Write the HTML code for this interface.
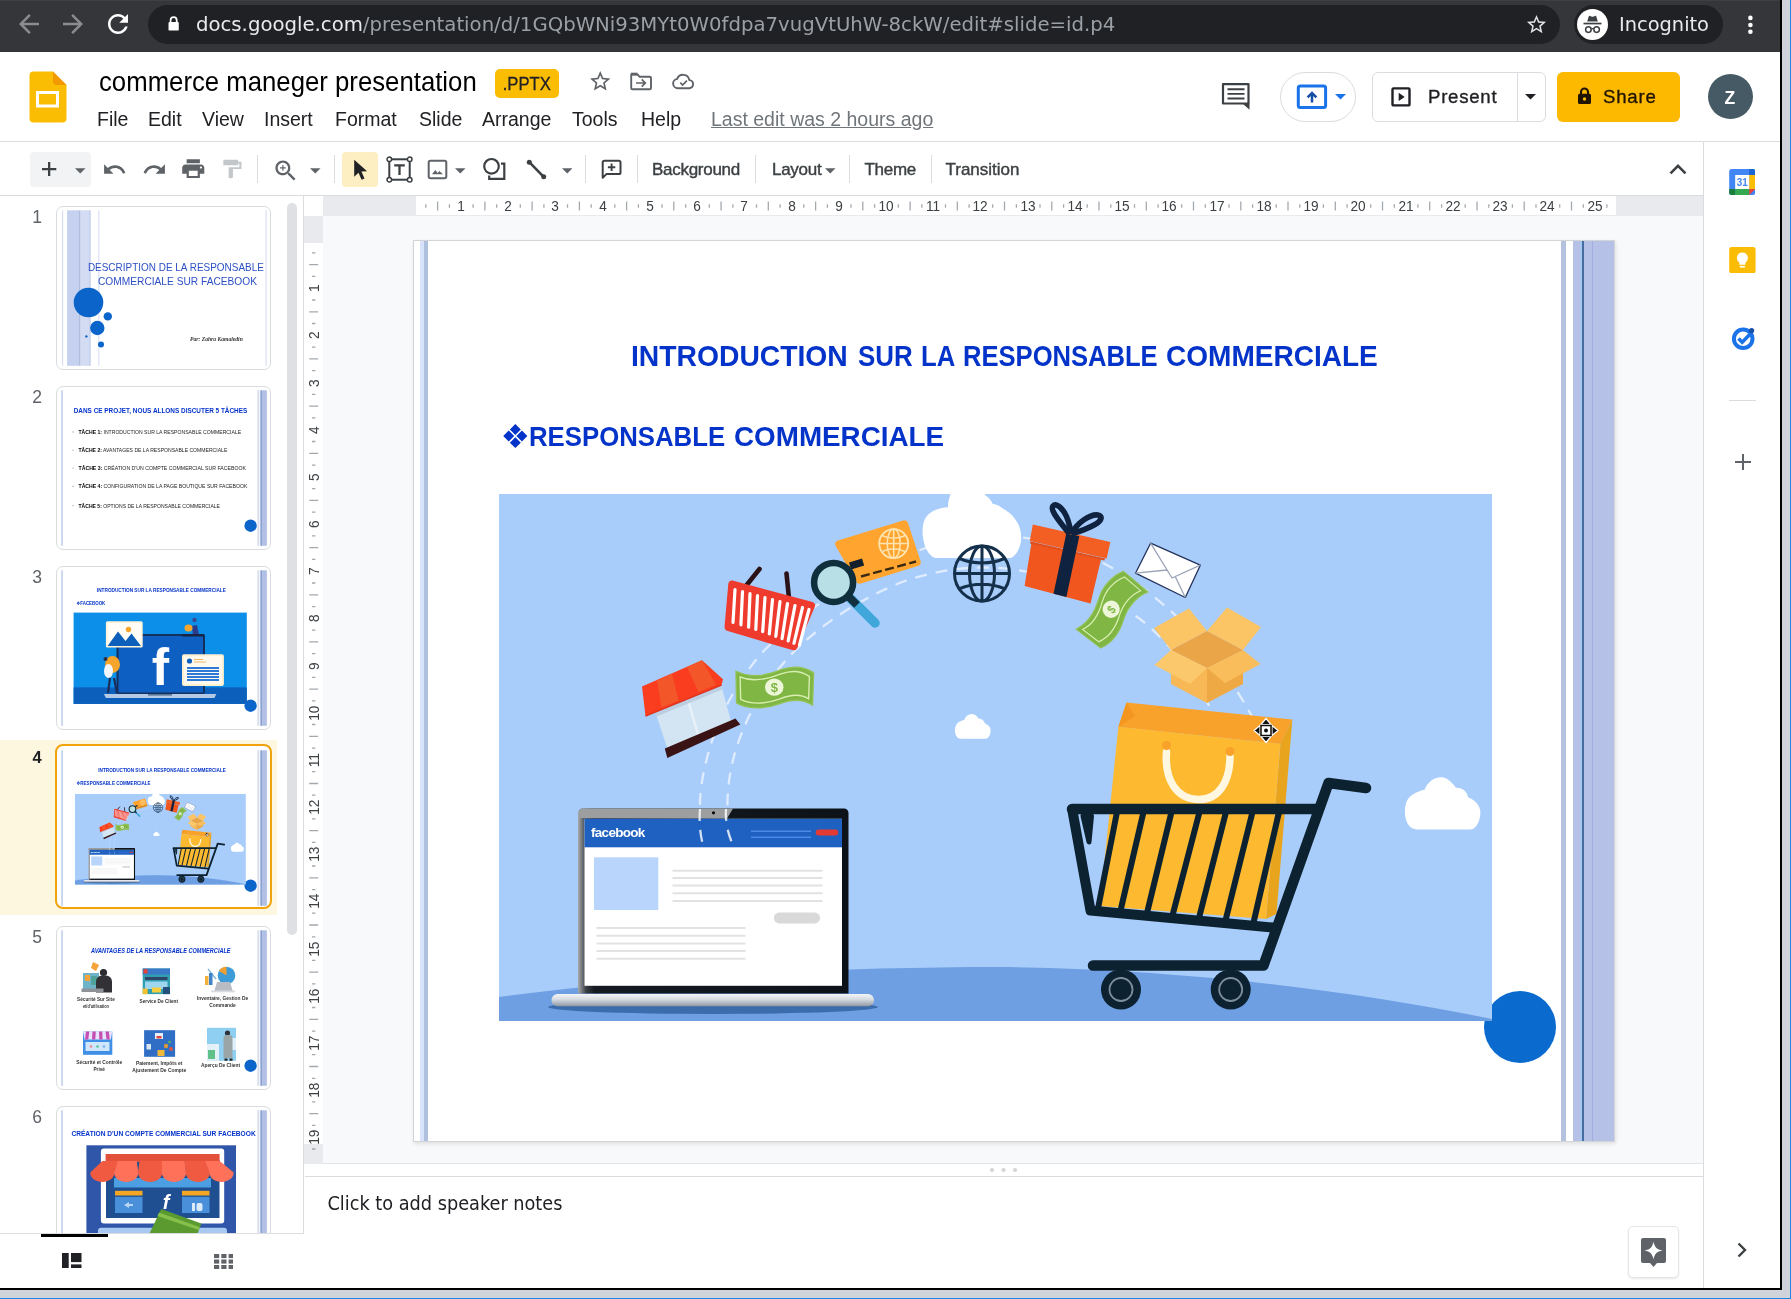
<!DOCTYPE html>
<html lang="en">
<head>
<meta charset="utf-8">
<title>commerce maneger presentation - Google Slides</title>
<style>
*{box-sizing:border-box;margin:0;padding:0}
html,body{width:1791px;height:1299px;overflow:hidden;background:#d0d3d9}
body{font-family:"Liberation Sans",sans-serif;color:#202124;position:relative}
.abs{position:absolute}
.t{position:absolute;white-space:nowrap;line-height:1}
#frame{position:absolute;left:0;top:0;width:1791px;height:1299px;background:#d0d3d9;border-right:1px solid #1e88e5;border-bottom:1px solid #1e88e5}
#win{position:absolute;left:0;top:0;width:1782px;height:1290px;background:#000}
#page{will-change:transform;position:absolute;left:0;top:0;width:1780px;height:1288px;background:#fff;overflow:hidden}
/* chrome */
#chrome{left:0;top:0;width:1780px;height:52px;background:#35363a;border-top:1px solid #3e3f42}
#omni{left:148px;top:5px;width:1412px;height:39px;border-radius:19.5px;background:#202124}
#incog{left:1574px;top:5px;width:149px;height:39px;border-radius:19.5px;background:#202124}
.dv{font-family:"DejaVu Sans",sans-serif}
.dvc{font-family:"DejaVu Sans Condensed","DejaVu Sans",sans-serif;font-stretch:condensed}
/* docs header */
#hdr{left:0;top:52px;width:1780px;height:90px;background:#fff;border-bottom:1px solid #dadce0}
.menu{font-size:19.5px;color:#202124;top:110px}
/* toolbar */
#tb{left:0;top:142px;width:1703px;height:54px;background:#fff;border-bottom:1px solid #dadce0}
.tbt{font-size:17px;color:#3c4043;top:160.600px;letter-spacing:-.28px;-webkit-text-stroke:.4px #3c4043}
.sep{position:absolute;top:155px;width:1px;height:28px;background:#dadce0}
/* panels */
#film{left:0;top:196px;width:304px;height:1092px;background:#fff;border-right:1px solid #dadce0}
#side{left:1703px;top:142px;width:77px;height:1146px;background:#fff;border-left:1px solid #dadce0}
#canvas{left:305px;top:196px;width:1398px;height:968px;background:#f8f9fa}
#notes{left:305px;top:1176px;width:1398px;height:112px;background:#fff;border-top:1px solid #dadce0}
.rn{width:30px;text-align:center;font-size:14.800px;color:#3c4043;transform:scaleX(.92)}
.rv{width:30px;height:14.600px;text-align:center;font-size:14.800px;color:#3c4043;transform:rotate(-90deg) scaleX(.92)}
.num{font-size:17.500px;color:#5f6368}
.thumb{position:absolute;left:56px;width:215px;height:163px;border:2px solid #dadce0;border-radius:6px;background:#fff;overflow:hidden}
</style>
</head>
<body>
<div id="frame"></div>
<div id="win"></div>
<div id="page">

<!-- ============ BROWSER CHROME ============ -->
<div id="chrome" class="abs"></div>
<div id="omni" class="abs"></div>
<div id="incog" class="abs"></div>

<svg class="abs" style="left:13.5px;top:9px" width="30" height="30" viewBox="0 0 24 24" fill="#8b8c8f"><path d="M20 11H7.83l5.59-5.59L12 4l-8 8 8 8 1.41-1.41L7.83 13H20v-2z"/></svg>
<svg class="abs" style="left:58.3px;top:9px" width="30" height="30" viewBox="0 0 24 24" fill="#8b8c8f"><path d="M12 4l-1.41 1.41L16.17 11H4v2h12.17l-5.58 5.59L12 20l8-8z"/></svg>
<svg class="abs" style="left:102.8px;top:9px" width="30" height="30" viewBox="0 0 24 24" fill="#fff"><path d="M17.65 6.35C16.2 4.9 14.21 4 12 4c-4.42 0-7.99 3.58-7.99 8s3.57 8 7.99 8c3.73 0 6.84-2.55 7.73-6h-2.08c-.82 2.33-3.04 4-5.65 4-3.31 0-6-2.69-6-6s2.69-6 6-6c1.66 0 3.14.69 4.22 1.78L13 11h7V4l-2.35 2.35z"/></svg>
<svg class="abs" style="left:167.5px;top:16px" width="11.3" height="15.3" viewBox="0 0 12 17"><path d="M2.6 7V4.6a3.4 3.4 0 0 1 6.8 0V7" fill="none" stroke="#fff" stroke-width="1.9"/><rect x="0.3" y="6.6" width="11.4" height="9.6" rx="1.3" fill="#fff"/></svg>
<svg class="abs" style="left:1525px;top:13px" width="23" height="23" viewBox="0 0 24 24" fill="#dfe1e5"><path d="M22 9.24l-7.19-.62L12 2 9.19 8.63 2 9.24l5.46 4.73L5.82 21 12 17.27 18.18 21l-1.63-7.03L22 9.24zM12 15.4l-3.76 2.27 1-4.28-3.32-2.88 4.38-.38L12 6.1l1.71 4.04 4.38.38-3.32 2.88 1 4.28L12 15.4z"/></svg>
<svg class="abs" style="left:1576.5px;top:9px" width="31" height="31" viewBox="0 0 31 31"><circle cx="15.5" cy="15.5" r="15.5" fill="#fff"/><path d="M10.2 12.6l1.5-5c.2-.6.8-.9 1.400-.7l1.300.5c.7.300 1.500.300 2.200 0l1.300-.5c.6-.2 1.200.1 1.400.7l1.500 5z" fill="#3c4043"/><rect x="6.500" y="13.700" width="18" height="1.700" fill="#3c4043"/><circle cx="11.400" cy="20.600" r="2.800" fill="none" stroke="#3c4043" stroke-width="1.500"/><circle cx="19.600" cy="20.600" r="2.800" fill="none" stroke="#3c4043" stroke-width="1.500"/><path d="M14.100 20.100c.9-.6 1.900-.6 2.800 0" fill="none" stroke="#3c4043" stroke-width="1.300"/></svg>
<svg class="abs" style="left:1746px;top:13px" width="9" height="23" viewBox="0 0 9 23" fill="#fff"><circle cx="4.400" cy="4.900" r="2.300"/><circle cx="4.400" cy="12" r="2.300"/><circle cx="4.400" cy="18.800" r="2.300"/></svg>

<span id="url" class="t dv" style="left:196px;top:15.200px;font-size:19.700px;color:#9aa0a6"><span style="color:#e8eaed">docs.google.com</span>/presentation/d/1GQbWNi93MYt0W0fdpa7vugVtUhW-8ckW/edit#slide=id.p4</span>
<span id="inc" class="t dv" style="left:1619px;top:14.5px;font-size:19.4px;color:#e8eaed">Incognito</span>

<!-- ============ DOCS HEADER ============ -->
<div id="hdr" class="abs"></div>

<svg class="abs" style="left:28px;top:70px" width="40" height="54" viewBox="0 0 40 54"><path d="M5.500 1.500h19.500l13.500 13.500v33.500a4 4 0 0 1-4 4h-29a4 4 0 0 1-4-4v-43a4 4 0 0 1 4-4z" fill="#fbbc04"/><path d="M25 1.500l13.500 13.500h-9.500a4 4 0 0 1-4-4z" fill="#f29900"/><rect x="9.500" y="22.500" width="20" height="13.500" fill="none" stroke="#fff" stroke-width="3"/></svg>
<svg class="abs" style="left:587.5px;top:69px" width="24.500" height="24.500" viewBox="0 0 24 24" fill="#5f6368"><path d="M22 9.240l-7.190-.620L12 2 9.190 8.630 2 9.240l5.460 4.730L5.820 21 12 17.270 18.180 21l-1.630-7.030L22 9.240zM12 15.400l-3.760 2.270 1-4.280-3.320-2.880 4.380-.380L12 6.100l1.710 4.040 4.380.380-3.320 2.880 1 4.280L12 15.400z"/></svg>
<svg class="abs" style="left:628px;top:69px" width="26" height="24" viewBox="0 0 26 24" fill="none" stroke="#5f6368" stroke-width="1.900"><path d="M3.200 5.500h6.300l2.200 2.300h10a1.300 1.300 0 0 1 1.300 1.300v9.800a1.300 1.300 0 0 1-1.300 1.300h-17.200a1.300 1.300 0 0 1-1.300-1.300z" stroke-linejoin="round"/><path d="M3 5h6.500" stroke-width="2.600"/><path d="M8 14h9M13.700 10.400l3.600 3.600-3.600 3.600" stroke-width="1.700"/></svg>
<svg class="abs" style="left:671px;top:70px" width="25" height="22" viewBox="0 0 25 22" fill="none" stroke="#5f6368" stroke-width="1.900"><path d="M6.800 18.200a4.700 4.700 0 0 1-.600-9.360a6.300 6.300 0 0 1 12.100 1.300a4.050 4.050 0 0 1 .2 8.060z" stroke-linejoin="round"/><path d="M9.300 12.700l2.300 2.300 4.300-4.300" stroke-width="1.700"/></svg>
<svg class="abs" style="left:1220px;top:81px" width="32" height="30" viewBox="0 0 32 30"><path d="M3 3.200h25.500v19.300h-22.500h-3z" fill="none" stroke="#3c4043" stroke-width="2.200" stroke-linejoin="round"/><path d="M22.500 22.500h7v6.300z" fill="#3c4043"/><path d="M7.500 8.300h17M7.500 12.900h17M7.500 17.500h17" stroke="#3c4043" stroke-width="1.900"/></svg>
<div class="abs" style="left:1280px;top:72px;width:75.500px;height:49.500px;border:1px solid #dadce0;border-radius:25px"></div>
<svg class="abs" style="left:1295px;top:83px" width="34" height="28" viewBox="0 0 34 28"><rect x="3.300" y="3.100" width="27.300" height="21.500" rx="2" fill="none" stroke="#1a73e8" stroke-width="3"/><path d="M17 19.500v-9M12.600 14.400l4.400-4.400 4.400 4.400" fill="none" stroke="#174ea6" stroke-width="2.500"/></svg>
<svg class="abs" style="left:1334.500px;top:94px" width="11" height="6" viewBox="0 0 11 6"><path d="M0 0h11l-5.500 5.500z" fill="#1a73e8"/></svg>
<div class="abs" style="left:1372px;top:72px;width:174px;height:49.500px;border:1px solid #dadce0;border-radius:6px"></div>
<div class="abs" style="left:1517px;top:72px;width:1px;height:49.500px;background:#dadce0"></div>
<svg class="abs" style="left:1390px;top:86px" width="22" height="22" viewBox="0 0 22 22"><rect x="2.500" y="2.400" width="17" height="17" rx="1" fill="none" stroke="#202124" stroke-width="2.400"/><path d="M8.700 6.800l6 4.100-6 4.100z" fill="#202124"/></svg>
<span id="present" class="t" style="left:1428px;top:87.500px;font-size:18.600px;color:#202124;letter-spacing:.75px;-webkit-text-stroke:.35px #202124">Present</span>
<svg class="abs" style="left:1525px;top:94px" width="11" height="6" viewBox="0 0 11 6"><path d="M0 0h11l-5.500 5.500z" fill="#202124"/></svg>
<div class="abs" style="left:1557px;top:71.500px;width:123px;height:50.500px;background:#fdb900;border-radius:6px"></div>
<svg class="abs" style="left:1577px;top:87px" width="15" height="18" viewBox="0 0 15 18"><path d="M4 7.500V5a3.500 3.500 0 0 1 7 0v2.500" fill="none" stroke="#201400" stroke-width="2.100"/><rect x="1" y="6.800" width="13" height="10.300" rx="1.500" fill="#201400"/><circle cx="7.500" cy="12" r="1.700" fill="#fbbc04"/></svg>
<span id="share" class="t" style="left:1603px;top:87.500px;font-size:18.600px;color:#201400;letter-spacing:.8px;-webkit-text-stroke:.35px #201400">Share</span>
<div class="abs" style="left:1707.500px;top:74px;width:45px;height:45px;border-radius:50%;background:#455a64"></div>
<span id="av" class="t" style="left:1724px;top:87.5px;font-size:19px;color:#fff;font-weight:bold;transform:scaleX(.92)">Z</span>

<span id="title" class="t" style="left:98.500px;top:67.800px;font-size:27.500px;color:#000;transform-origin:0 0;transform:scaleX(.936)">commerce maneger presentation</span>
<span id="pptx" class="t" style="left:495px;top:69px;width:64px;height:29px;background:#fbbc04;border-radius:5px;font-size:18.5px;line-height:30px;text-align:center;color:#202124;-webkit-text-stroke:.3px #202124"><span style="display:inline-block;transform:scaleX(.9)">.PPTX</span></span>
<span id="m1" class="t menu" style="left:97px">File</span>
<span id="m2" class="t menu" style="left:148px">Edit</span>
<span id="m3" class="t menu" style="left:202px">View</span>
<span id="m4" class="t menu" style="left:264px">Insert</span>
<span id="m5" class="t menu" style="left:335px">Format</span>
<span id="m6" class="t menu" style="left:419px">Slide</span>
<span id="m7" class="t menu" style="left:482px">Arrange</span>
<span id="m8" class="t menu" style="left:572px">Tools</span>
<span id="m9" class="t menu" style="left:641px">Help</span>
<span id="m10" class="t menu" style="left:711px;color:#70757a;text-decoration:underline">Last edit was 2 hours ago</span>

<!-- ============ TOOLBAR ============ -->
<div id="tb" class="abs"></div>

<div class="abs" style="left:30px;top:152px;width:61px;height:35px;border-radius:4px;background:#f1f3f4"></div>
<svg class="abs" style="left:42.300px;top:162px" width="14.300" height="14.300" viewBox="0 0 15 15"><path d="M7.500 0v15M0 7.500h15" stroke="#3c4043" stroke-width="2.400"/></svg>
<svg class="abs" style="left:75px;top:168px" width="10.500" height="5.500" viewBox="0 0 10 5"><path d="M0 0h10l-5 5z" fill="#5f6368"/></svg>
<svg class="abs" style="left:101.500px;top:156.800px" width="25" height="25" viewBox="0 0 24 24" fill="#5f6368"><path d="M12.500 8c-2.650 0-5.050.990-6.900 2.600L2 7v9h9l-3.620-3.620c1.390-1.160 3.160-1.880 5.120-1.880 3.540 0 6.550 2.310 7.600 5.500l2.370-.780C21.080 11.030 17.150 8 12.500 8z"/></svg>
<svg class="abs" style="left:141.900px;top:156.800px" width="25" height="25" viewBox="0 0 24 24" fill="#5f6368"><path d="M18.400 10.600C16.550 8.990 14.150 8 11.500 8c-4.650 0-8.580 3.030-9.960 7.220L3.900 16c1.050-3.190 4.050-5.500 7.600-5.500 1.950 0 3.730.720 5.120 1.880L13 16h9V7l-3.600 3.600z"/></svg>
<svg class="abs" style="left:179.500px;top:156.200px" width="26.500" height="25.200" preserveAspectRatio="none" viewBox="0 0 24 24" fill="#5f6368"><path d="M19 8H5c-1.660 0-3 1.340-3 3v6h4v4h12v-4h4v-6c0-1.660-1.340-3-3-3zm-3 11H8v-5h8v5zm3-7c-.550 0-1-.450-1-1s.450-1 1-1 1 .450 1 1-.450 1-1 1zm-1-9H6v4h12V3z"/></svg>
<svg class="abs" style="left:219.400px;top:158.400px" width="25.700" height="22" preserveAspectRatio="none" viewBox="0 0 24 24" fill="#c4c7ca"><path d="M18 4V3c0-.550-.450-1-1-1H5c-.550 0-1 .450-1 1v4c0 .550.450 1 1 1h12c.550 0 1-.450 1-1V6h1v4H9v11c0 .550.450 1 1 1h2c.550 0 1-.450 1-1v-9h8V4h-3z"/></svg>
<div class="sep" style="left:257px"></div>
<svg class="abs" style="left:271.500px;top:157px" width="27.500" height="27.500" viewBox="0 0 24 24" fill="#5f6368"><path d="M15.500 14h-.790l-.280-.270C15.410 12.590 16 11.110 16 9.500 16 5.910 13.090 3 9.500 3S3 5.910 3 9.500 5.910 16 9.500 16c1.610 0 3.090-.590 4.230-1.570l.270.280v.790l5 4.990L20.490 19l-4.990-5zm-6 0C7.010 14 5 11.990 5 9.500S7.010 5 9.500 5 14 7.010 14 9.500 11.990 14 9.500 14zM12 10h-2v2H9v-2H7V9h2V7h1v2h2v1z"/></svg>
<svg class="abs" style="left:310px;top:168px" width="10.500" height="5.500" viewBox="0 0 10 5"><path d="M0 0h10l-5 5z" fill="#5f6368"/></svg>
<div class="sep" style="left:334px"></div>
<div class="abs" style="left:342px;top:152px;width:36px;height:35px;border-radius:4px;background:#feefc3"></div>
<svg class="abs" style="left:353px;top:158.500px" width="16" height="22" viewBox="0 0 16 22"><path d="M1.200 .8v17l4.300-4.100 3.100 7.100 2.900-1.250-3.100-7 5.700-.35z" fill="#202124"/></svg>
<svg class="abs" style="left:386px;top:156px" width="27" height="27" viewBox="0 0 27 27" fill="none" stroke="#3c4043"><rect x="3.300" y="3.300" width="20.400" height="20.400" stroke-width="2"/><g fill="#fff" stroke-width="1.500"><circle cx="3.300" cy="3.300" r="2.300"/><circle cx="23.700" cy="3.300" r="2.300"/><circle cx="3.300" cy="23.700" r="2.300"/><circle cx="23.700" cy="23.700" r="2.300"/></g><path d="M8.200 9.300h10.600M13.500 9.300v9.700" stroke-width="2.300"/></svg>
<svg class="abs" style="left:426.500px;top:159px" width="21" height="21" viewBox="0 0 21 21"><rect x="1.700" y="1.700" width="17.600" height="17.600" rx="1.700" fill="none" stroke="#5f6368" stroke-width="2"/><path d="M5 15.300l3.300-4.300 2.400 2.900 1.700-2 3.600 3.400z" fill="#5f6368"/></svg>
<svg class="abs" style="left:455px;top:168px" width="10.500" height="5.500" viewBox="0 0 10 5"><path d="M0 0h10l-5 5z" fill="#5f6368"/></svg>
<svg class="abs" style="left:481.500px;top:157px" width="25" height="24" viewBox="0 0 25 24" fill="none" stroke="#3c4043" stroke-width="2.200"><circle cx="9.500" cy="9.300" r="7.300"/><path d="M19 6.700h3.300v15.200h-15.100v-3.400"/></svg>
<svg class="abs" style="left:524.500px;top:158px" width="23" height="23" viewBox="0 0 23 23"><path d="M4.300 4.200l14.400 14.600" stroke="#3c4043" stroke-width="2.600"/><circle cx="4.300" cy="4.200" r="2.500" fill="#3c4043"/><circle cx="18.700" cy="18.800" r="2.500" fill="#3c4043"/></svg>
<svg class="abs" style="left:561.500px;top:168px" width="10.500" height="5.500" viewBox="0 0 10 5"><path d="M0 0h10l-5 5z" fill="#5f6368"/></svg>
<div class="sep" style="left:585px"></div>
<svg class="abs" style="left:599.500px;top:158px" width="23" height="23" viewBox="0 0 23 23" fill="none" stroke="#3c4043"><path d="M2.700 19.800V4.300a1.600 1.600 0 0 1 1.600-1.600h14.600a1.600 1.600 0 0 1 1.600 1.600v10.200a1.600 1.600 0 0 1-1.600 1.600H6.400z" stroke-width="2" stroke-linejoin="round"/><path d="M11.600 5.600v7.400M7.900 9.300h7.400" stroke-width="1.900"/></svg>
<div class="sep" style="left:637px"></div>
<div class="sep" style="left:755px"></div>
<svg class="abs" style="left:825px;top:168px" width="10.500" height="5.500" viewBox="0 0 10 5"><path d="M0 0h10l-5 5z" fill="#5f6368"/></svg>
<div class="sep" style="left:849px"></div>
<div class="sep" style="left:931px"></div>
<svg class="abs" style="left:1669px;top:163px" width="18" height="12" viewBox="0 0 18 12"><path d="M1.500 10.300l7.500-7.500 7.500 7.500" fill="none" stroke="#3c4043" stroke-width="2.600"/></svg>

<span id="tb1" class="t tbt" style="left:652px">Background</span>
<span id="tb2" class="t tbt" style="left:772px">Layout</span>
<span id="tb3" class="t tbt" style="left:864.5px">Theme</span>
<span id="tb4" class="t tbt" style="left:945.5px;letter-spacing:0">Transition</span>

<!-- ============ PANELS ============ -->
<div id="film" class="abs"></div>
<div id="canvas" class="abs"></div>
<div class="abs" style="left:305px;top:1163px;width:1398px;height:1px;background:#e3e4e6"></div>
<div id="notes" class="abs"></div>
<div id="side" class="abs"></div>
<!--FILM-START-->
<div class="abs" style="left:0;top:740px;width:277px;height:175px;background:#fef7e0"></div>
<div class="abs" style="left:287px;top:203px;width:10px;height:732px;border-radius:5px;background:#dee0e4"></div>
<span class="t num" style="left:27px;top:209.0px;width:20px;text-align:center;color:#5f6368;font-weight:normal">1</span>
<div class="abs" style="left:56.200px;top:205.9px;width:214.400px;height:164.0px;border:1.800px solid #d8dbe0;border-radius:7px;background:#fff"></div>
<span class="t num" style="left:27px;top:389.0px;width:20px;text-align:center;color:#5f6368;font-weight:normal">2</span>
<div class="abs" style="left:56.200px;top:385.9px;width:214.400px;height:164.0px;border:1.800px solid #d8dbe0;border-radius:7px;background:#fff"></div>
<span class="t num" style="left:27px;top:569.0px;width:20px;text-align:center;color:#5f6368;font-weight:normal">3</span>
<div class="abs" style="left:56.200px;top:565.9px;width:214.400px;height:164.0px;border:1.800px solid #d8dbe0;border-radius:7px;background:#fff"></div>
<span class="t num" style="left:27px;top:749.0px;width:20px;text-align:center;color:#202124;font-weight:bold;font-size:16.500px">4</span>
<div class="abs" style="left:55.400px;top:744.3px;width:216.400px;height:165px;border:2.600px solid #f0a30a;border-radius:8px;background:#fff"></div>
<span class="t num" style="left:27px;top:929.0px;width:20px;text-align:center;color:#5f6368;font-weight:normal">5</span>
<div class="abs" style="left:56.200px;top:925.9px;width:214.400px;height:164.0px;border:1.800px solid #d8dbe0;border-radius:7px;background:#fff"></div>
<span class="t num" style="left:27px;top:1109.0px;width:20px;text-align:center;color:#5f6368;font-weight:normal">6</span>
<div class="abs" style="left:56.200px;top:1105.9px;width:214.400px;height:130.0px;border:1.800px solid #d8dbe0;border-radius:7px;background:#fff;border-bottom:none;border-radius:7px 7px 0 0"></div>
<svg class="abs" style="left:0;top:196px" width="304" height="1037" viewBox="0 196 304 1037">
<defs><clipPath id="fc"><rect x="0" y="196" width="304" height="1037"/></clipPath></defs><g clip-path="url(#fc)">
<rect x="60.2" y="210.3" width="206.7" height="155.5" fill="#fff"/>
<rect x="62.200" y="210.3" width=".900" height="155.5" fill="#c9d3ee"/>
<rect x="67.100" y="210.3" width="12" height="155.5" fill="#c5d1ef"/>
<rect x="79.100" y="210.3" width="1.500" height="155.5" fill="#a9b6da"/>
<rect x="80.600" y="210.3" width="10" height="155.5" fill="#d3dcf3"/>
<rect x="89.300" y="210.3" width="1.200" height="155.5" fill="#c3cdea"/>
<rect x="98" y="210.3" width="1.500" height="155.5" fill="#e1e7f6"/>
<rect x="265.600" y="210.3" width=".900" height="155.5" fill="#ccd5ee"/>
<circle cx="88.5" cy="302.5" r="14.8" fill="#0b64c9"/>
<circle cx="107.8" cy="316.4" r="4.2" fill="#0b64c9"/>
<circle cx="97.3" cy="328.0" r="7.2" fill="#0b64c9"/>
<circle cx="86.4" cy="336.4" r="1.2" fill="#0b64c9"/>
<circle cx="101.0" cy="344.6" r="3.0" fill="#0b64c9"/>
<text x="87.9" y="270.9" font-family="Liberation Sans,sans-serif" font-size="10.3" font-weight="normal" fill="#2d50c4" text-anchor="start" textLength="176.0" lengthAdjust="spacingAndGlyphs">DESCRIPTION DE LA RESPONSABLE</text>
<text x="98.0" y="285.1" font-family="Liberation Sans,sans-serif" font-size="10.3" font-weight="normal" fill="#2d50c4" text-anchor="start" textLength="159.0" lengthAdjust="spacingAndGlyphs">COMMERCIALE SUR FACEBOOK</text>
<text x="190.0" y="340.5" font-family="Liberation Serif,serif" font-size="5.2" font-weight="bold" font-style="italic" fill="#333" text-anchor="start" textLength="52.8" lengthAdjust="spacingAndGlyphs">Par: Zahra Kamaledin</text>
<rect x="60.2" y="390.3" width="206.7" height="155.5" fill="#fff"/>
<rect x="61.300" y="390.3" width="1.500" height="155.5" fill="#bccaeb"/>
<rect x="257.600" y="390.3" width="1" height="155.5" fill="#c0cbe6"/>
<rect x="259.800" y="390.3" width="7.100" height="155.5" fill="#b3c0e6"/>
<rect x="261.200" y="390.3" width=".600" height="155.5" fill="#6f8fc0"/>
<circle cx="250.600" cy="525.7" r="6.200" fill="#0b64c9"/>
<text x="73.7" y="413.4" font-family="Liberation Sans,sans-serif" font-size="7" font-weight="bold" fill="#0433c9" text-anchor="start" textLength="173.6" lengthAdjust="spacingAndGlyphs">DANS CE PROJET, NOUS ALLONS DISCUTER 5 TÂCHES</text>
<circle cx="73.100" cy="432.0" r=".700" fill="#9aa0a6"/>
<text x="78.500" y="434.0" font-family="Liberation Sans,sans-serif" font-size="5.400" fill="#222" textLength="162.6" lengthAdjust="spacingAndGlyphs"><tspan font-weight="bold" fill="#000">TÂCHE 1:</tspan> INTRODUCTION SUR LA RESPONSABLE COMMERCIALE</text>
<circle cx="73.100" cy="450.1" r=".700" fill="#9aa0a6"/>
<text x="78.500" y="452.1" font-family="Liberation Sans,sans-serif" font-size="5.400" fill="#222" textLength="148.8" lengthAdjust="spacingAndGlyphs"><tspan font-weight="bold" fill="#000">TÂCHE 2:</tspan> AVANTAGES DE LA RESPONSABLE COMMERCIALE</text>
<circle cx="73.100" cy="468.1" r=".700" fill="#9aa0a6"/>
<text x="78.500" y="470.1" font-family="Liberation Sans,sans-serif" font-size="5.400" fill="#222" textLength="167.4" lengthAdjust="spacingAndGlyphs"><tspan font-weight="bold" fill="#000">TÂCHE 3:</tspan> CRÉATION D'UN COMPTE COMMERCIAL SUR FACEBOOK</text>
<circle cx="73.100" cy="486.4" r=".700" fill="#9aa0a6"/>
<text x="78.500" y="488.4" font-family="Liberation Sans,sans-serif" font-size="5.400" fill="#222" textLength="168.8" lengthAdjust="spacingAndGlyphs"><tspan font-weight="bold" fill="#000">TÂCHE 4:</tspan> CONFIGURATION DE LA PAGE BOUTIQUE SUR FACEBOOK</text>
<circle cx="73.100" cy="505.6" r=".700" fill="#9aa0a6"/>
<text x="78.500" y="507.6" font-family="Liberation Sans,sans-serif" font-size="5.400" fill="#222" textLength="141.5" lengthAdjust="spacingAndGlyphs"><tspan font-weight="bold" fill="#000">TÂCHE 5:</tspan> OPTIONS DE LA RESPONSABLE COMMERCIALE</text>
<rect x="60.2" y="570.3" width="206.7" height="155.5" fill="#fff"/>
<rect x="61.300" y="570.3" width="1.500" height="155.5" fill="#bccaeb"/>
<rect x="257.600" y="570.3" width="1" height="155.5" fill="#c0cbe6"/>
<rect x="259.800" y="570.3" width="7.100" height="155.5" fill="#b3c0e6"/>
<rect x="261.200" y="570.3" width=".600" height="155.5" fill="#6f8fc0"/>
<circle cx="250.600" cy="705.7" r="6.200" fill="#0b64c9"/>
<text x="96.9" y="591.6" font-family="Liberation Sans,sans-serif" font-size="5.4" font-weight="bold" fill="#0433c9" text-anchor="start" textLength="129.0" lengthAdjust="spacingAndGlyphs">INTRODUCTION SUR LA RESPONSABLE COMMERCIALE</text>
<text x="76.3" y="605.4" font-family="Liberation Sans,DejaVu Sans,sans-serif" font-size="5" font-weight="bold" fill="#0433c9" text-anchor="start" textLength="29.0" lengthAdjust="spacingAndGlyphs">❖FACEBOOK</text>
<g>
<rect x="73.600" y="612.600" width="173.200" height="91.300" fill="#0b8fe9"/>
<rect x="73.600" y="687.400" width="173.200" height="16.500" fill="#0c5fbb"/>
<rect x="116.500" y="634" width="88.500" height="60" rx="2" fill="#14315e"/>
<rect x="118.500" y="636" width="84.500" height="56.500" fill="#0d5fc2"/>
<path d="M103.900 694h112.500l-2 4h-108.500z" fill="#b3c9e6"/>
<rect x="148" y="694" width="24" height="1.600" fill="#5b7597"/>
<text x="160.500" y="684.500" font-family="Liberation Sans,sans-serif" font-weight="bold" font-size="52" text-anchor="middle" fill="#fff">f</text>
<rect x="105.900" y="621.300" width="36.800" height="26.300" rx="1.500" fill="#fff3d8"/>
<rect x="107.600" y="623" width="33.400" height="22.900" fill="#fffdf6"/>
<path d="M107.600 645.900l10.400-14.500 7.500 9.500 6-7.500 9.500 12.500z" fill="#0c5fbb"/>
<circle cx="128.500" cy="629.500" r="2.700" fill="#f7a62b"/>
<rect x="182" y="654.300" width="41.900" height="31.700" rx="2" fill="#fff0cf"/>
<rect x="184" y="656.300" width="37.900" height="27.700" rx="1" fill="#fffaf0"/>
<circle cx="189.500" cy="661" r="2.600" fill="#0c5fbb"/>
<path d="M194 659.500h9M194 662h12" stroke="#f3b562" stroke-width="1.200"/>
<path d="M187 668h32M187 671h32M187 674h32M187 677h32M187 680h32" stroke="#2f7ad6" stroke-width="1.900"/>
<ellipse cx="112.500" cy="664.500" rx="7.500" ry="8.500" fill="#f7a62b"/>
<ellipse cx="108.500" cy="671" rx="4.500" ry="7" fill="#f3f6fb"/>
<path d="M110 678l-2 15M114 678l3 15" stroke="#1b2f5e" stroke-width="2.300"/>
<circle cx="105.500" cy="659" r="2" fill="#2a2f45"/>
<path d="M192 626l5-1 2 10-6 1z" fill="#2b3c8f"/>
<circle cx="194.500" cy="620" r="2.200" fill="#3b4a90"/>
<ellipse cx="188.500" cy="628" rx="4" ry="3.500" fill="#f7a62b"/>
<path d="M182 634h22v2.500h-22z" fill="#1b2440"/>
</g>
<rect x="60.2" y="750.3" width="206.7" height="155.5" fill="#fff"/>
<rect x="61.300" y="750.3" width="1.500" height="155.5" fill="#bccaeb"/>
<rect x="257.600" y="750.3" width="1" height="155.5" fill="#c0cbe6"/>
<rect x="259.800" y="750.3" width="7.100" height="155.5" fill="#b3c0e6"/>
<rect x="261.200" y="750.3" width=".600" height="155.5" fill="#6f8fc0"/>
<circle cx="250.600" cy="885.7" r="6.200" fill="#0b64c9"/>
<text x="98.3" y="771.5" font-family="Liberation Sans,sans-serif" font-size="5.4" font-weight="bold" fill="#0433c9" text-anchor="start" textLength="127.6" lengthAdjust="spacingAndGlyphs">INTRODUCTION SUR LA RESPONSABLE COMMERCIALE</text>
<text x="76.2" y="785.3" font-family="Liberation Sans,DejaVu Sans,sans-serif" font-size="5.2" font-weight="bold" fill="#0433c9" text-anchor="start" textLength="74.4" lengthAdjust="spacingAndGlyphs">❖RESPONSABLE COMMERCIALE</text>
<use href="#illusg" transform="translate(-11.11 708.79) scale(0.17225)"/>
<rect x="60.2" y="930.3" width="206.7" height="155.5" fill="#fff"/>
<rect x="61.300" y="930.3" width="1.500" height="155.5" fill="#bccaeb"/>
<rect x="257.600" y="930.3" width="1" height="155.5" fill="#c0cbe6"/>
<rect x="259.800" y="930.3" width="7.100" height="155.5" fill="#b3c0e6"/>
<rect x="261.200" y="930.3" width=".600" height="155.5" fill="#6f8fc0"/>
<circle cx="250.600" cy="1065.7" r="6.200" fill="#0b64c9"/>
<text x="91.1" y="952.8" font-family="Liberation Sans,sans-serif" font-size="7.2" font-weight="bold" font-style="italic" fill="#0433c9" text-anchor="start" textLength="139.5" lengthAdjust="spacingAndGlyphs">AVANTAGES DE LA RESPONSABLE COMMERCIALE</text>
<g>
<rect x="83" y="973" width="16" height="17" fill="#6fb3c9"/><rect x="85" y="975" width="5" height="6" fill="#f2a33a"/><rect x="91" y="976" width="6" height="9" fill="#4fa39a"/>
<path d="M93 962l6 3-3 6-5-3z" fill="#f5a338"/>
<circle cx="103.500" cy="972.500" r="3.600" fill="#2b2b2f"/><path d="M96 992.500v-11a6 6 0 0 1 6-6h4a6 6 0 0 1 6 6v11z" fill="#323236"/>
<rect x="81.500" y="988.500" width="22" height="3.500" fill="#8d9299"/>
<rect x="142.700" y="968.500" width="27.300" height="25.600" fill="#2f9fb0"/>
<rect x="142.700" y="968.500" width="27.300" height="6" fill="#3a79c7"/><rect x="143.500" y="969.200" width="4" height="4.200" fill="#e0453a"/>
<rect x="145" y="977" width="22.500" height="3" fill="#31456b"/><rect x="145" y="981.500" width="22.500" height="7.500" fill="#9ed6f0"/>
<rect x="142.700" y="988.500" width="5" height="5.600" fill="#f2c12e"/><rect x="152" y="987.500" width="9" height="5" fill="#f5cf3d"/><rect x="163" y="987" width="7" height="7.100" fill="#24507c"/>
<circle cx="226.500" cy="975.500" r="8.800" fill="#3d9bd8"/><path d="M226.500 975.500v-8.800a8.800 8.800 0 0 0-7.500 4.200z" fill="#f0a030"/>
<path d="M208 969l8 10" stroke="#7ab8e6" stroke-width="1.300"/>
<rect x="205" y="976" width="3.500" height="9" fill="#f3b13c"/><rect x="209" y="973" width="3.500" height="12" fill="#3f84c8"/>
<path d="M214 992l3-10h13l3 10z" fill="#b9bcc2"/><rect x="211" y="990.500" width="24" height="1.800" fill="#d9dbe0"/>
<rect x="83" y="1031.600" width="29.300" height="23.200" fill="#3f8fe6"/>
<path d="M83 1031.600h29.300l-1.500 8h-26.300z" fill="#e9e3ff"/><path d="M86 1031.600h3.300l-1 8h-3.300zM92.500 1031.600h3.300l-.5 8h-3.300zM99 1031.600h3.300l.3 8h-3.300zM105.500 1031.600h3.300l1 8h-3.300z" fill="#c44fb0"/>
<rect x="85.500" y="1042" width="24" height="9" fill="#cfe6fb"/><circle cx="91" cy="1046.500" r="1.300" fill="#f08a9a"/><circle cx="97.500" cy="1046.500" r="1.300" fill="#54c6a0"/><circle cx="104" cy="1046.500" r="1.300" fill="#7ab3f0"/>
<rect x="144.100" y="1030.200" width="31" height="26.600" fill="#2f6ec4"/>
<rect x="155" y="1033" width="8" height="6" fill="#e8eef8"/><rect x="156.500" y="1036" width="5" height="2.500" fill="#d9473c"/>
<rect x="146.500" y="1044" width="4.500" height="5.500" fill="#d8e6ef"/><rect x="157.500" y="1050" width="7" height="6" fill="#f0b93a"/>
<circle cx="166" cy="1046" r="2.200" fill="#d8983a"/><circle cx="171" cy="1049" r="2" fill="#d65748"/><circle cx="169.500" cy="1042" r="1.500" fill="#58a86a"/>
<rect x="207" y="1027.800" width="29" height="33" fill="#8fd0f2"/>
<rect x="207" y="1044" width="12" height="16.800" fill="#e4f1f8"/><rect x="208" y="1050" width="7" height="9" fill="#5fc08a"/>
<rect x="226" y="1038" width="10" height="12" fill="#dff0fa"/>
<circle cx="227.500" cy="1033" r="2.600" fill="#30323a"/><path d="M223.500 1058v-20a3 3 0 0 1 3-3h3a3 3 0 0 1 3 3v20z" fill="#9aa5a8"/><path d="M224.500 1058.500h3v2.300h-3zM229.500 1058.500h3v2.300h-3z" fill="#222"/>
</g>
<text x="95.9" y="1001.3" font-family="Liberation Sans,sans-serif" font-size="4.700" font-weight="bold" fill="#333" text-anchor="middle" textLength="37.7" lengthAdjust="spacingAndGlyphs">Sécurité Sur Site</text>
<text x="95.9" y="1008.1" font-family="Liberation Sans,sans-serif" font-size="4.700" font-weight="bold" fill="#333" text-anchor="middle" textLength="26.0" lengthAdjust="spacingAndGlyphs">et/d'utilisation</text>
<text x="158.8" y="1002.7" font-family="Liberation Sans,sans-serif" font-size="4.700" font-weight="bold" fill="#333" text-anchor="middle" textLength="38.4" lengthAdjust="spacingAndGlyphs">Service De Client</text>
<text x="222.5" y="1000.0" font-family="Liberation Sans,sans-serif" font-size="4.700" font-weight="bold" fill="#333" text-anchor="middle" textLength="51.2" lengthAdjust="spacingAndGlyphs">Inventaire, Gestion De</text>
<text x="222.5" y="1006.7" font-family="Liberation Sans,sans-serif" font-size="4.700" font-weight="bold" fill="#333" text-anchor="middle" textLength="26.5" lengthAdjust="spacingAndGlyphs">Commande</text>
<text x="99.2" y="1063.9" font-family="Liberation Sans,sans-serif" font-size="4.700" font-weight="bold" fill="#333" text-anchor="middle" textLength="45.8" lengthAdjust="spacingAndGlyphs">Sécurité et Contrôle</text>
<text x="99.2" y="1070.8" font-family="Liberation Sans,sans-serif" font-size="4.700" font-weight="bold" fill="#333" text-anchor="middle" textLength="11.5" lengthAdjust="spacingAndGlyphs">Privé</text>
<text x="159.2" y="1065.3" font-family="Liberation Sans,sans-serif" font-size="4.700" font-weight="bold" fill="#333" text-anchor="middle" textLength="46.5" lengthAdjust="spacingAndGlyphs">Paiement, Impôts et</text>
<text x="159.2" y="1072.1" font-family="Liberation Sans,sans-serif" font-size="4.700" font-weight="bold" fill="#333" text-anchor="middle" textLength="53.9" lengthAdjust="spacingAndGlyphs">Ajustement De Compte</text>
<text x="220.5" y="1066.7" font-family="Liberation Sans,sans-serif" font-size="4.700" font-weight="bold" fill="#333" text-anchor="middle" textLength="39.1" lengthAdjust="spacingAndGlyphs">Aperçu De Client</text>
<rect x="60.2" y="1110.3" width="206.7" height="155.5" fill="#fff"/>
<rect x="61.300" y="1110.3" width="1.500" height="155.5" fill="#bccaeb"/>
<rect x="257.600" y="1110.3" width="1" height="155.5" fill="#c0cbe6"/>
<rect x="259.800" y="1110.3" width="7.100" height="155.5" fill="#b3c0e6"/>
<rect x="261.200" y="1110.3" width=".600" height="155.5" fill="#6f8fc0"/>
<text x="71.4" y="1136.4" font-family="Liberation Sans,sans-serif" font-size="7" font-weight="bold" fill="#0433c9" text-anchor="start" textLength="184.3" lengthAdjust="spacingAndGlyphs">CRÉATION D'UN COMPTE COMMERCIAL SUR FACEBOOK</text>
<g>
<rect x="86.400" y="1145.300" width="149.600" height="95" fill="#2f56a9"/>
<rect x="100.900" y="1148.600" width="123.300" height="75" rx="3" fill="#fff"/>
<rect x="106" y="1160" width="113.500" height="58" fill="#1f4f90"/>
<rect x="114" y="1178" width="97" height="9.500" fill="#4b9fe2"/>
<rect x="105.600" y="1154" width="114" height="8" fill="#e4513a"/>
<g>
<path d="M90.200 1172.500c0 12.500 24.200 12.500 24.200 0l4-11.500h-16z" fill="#ef5a40"/>
<path d="M114.100 1172.500c0 12.500 24.200 12.500 24.200 0l-1.500-11.500h-19z" fill="#ff7159"/>
<path d="M138 1172.500c0 12.500 24.200 12.500 24.200 0v-11.500h-22.700z" fill="#ef5a40"/>
<path d="M161.900 1172.500c0 12.500 24.200 12.500 24.200 0l-1.500-11.500h-22.700z" fill="#ff7159"/>
<path d="M185.800 1172.500c0 12.500 24.200 12.500 24.200 0l-4.500-11.500h-21z" fill="#ef5a40"/>
<path d="M209.500 1172.500c0 12.500 24.200 12.500 24.200 0l-14-11.500h-14.500z" fill="#ff7159"/>
</g>
<rect x="115" y="1190.800" width="27.500" height="4.700" fill="#f5a623"/><rect x="182" y="1190.800" width="27.500" height="4.700" fill="#f5a623"/>
<rect x="115" y="1196.800" width="27.500" height="16.200" fill="#4a8fd9"/><rect x="182" y="1196.800" width="27.500" height="16.200" fill="#4a8fd9"/>
<path d="M124 1205l5-3v2h4v2h-4v2z" fill="#b9d7f5"/><rect x="192" y="1203" width="3" height="8" fill="#dcebfa"/><rect x="196.500" y="1203" width="6" height="8" rx="2" fill="#dcebfa"/>
<text x="166" y="1209" font-family="Liberation Sans,sans-serif" font-weight="bold" font-size="20" text-anchor="middle" fill="#fff" font-style="italic">f</text>
<rect x="98" y="1227.700" width="129" height="8" rx="3" fill="#a9c9f2"/>
<path d="M161.200 1208.900L201.400 1223.600L197.400 1234L149.200 1234z" fill="#5a9a2f"/>
<path d="M159 1212.500l40.500 14.500-1 3-41-14z" fill="#86c04a"/>
</g>
</g></svg>
<div class="abs" style="left:0;top:1233px;width:304px;height:55px;background:#fff;border-top:1px solid #dadce0"></div>
<div class="abs" style="left:41px;top:1234.200px;width:67px;height:2.600px;background:#000"></div>
<svg class="abs" style="left:62px;top:1252.800px" width="19.500" height="15.200" viewBox="0 0 19.500 15.200" fill="#202124"><rect x="0" y="0" width="6.700" height="15.200"/><rect x="9" y="0" width="10.500" height="9.100"/><rect x="9" y="11.400" width="10.500" height="3.800"/></svg>
<svg class="abs" style="left:213.700px;top:1253.500px" width="19.800" height="15.100" viewBox="0 0 19.800 15.100" fill="#5f6368"><rect x="0.0" y="0.0" width="5.200" height="4.100"/><rect x="0.0" y="5.5" width="5.200" height="4.100"/><rect x="0.0" y="11.0" width="5.200" height="4.100"/><rect x="7.3" y="0.0" width="5.200" height="4.100"/><rect x="7.3" y="5.5" width="5.200" height="4.100"/><rect x="7.3" y="11.0" width="5.200" height="4.100"/><rect x="14.6" y="0.0" width="5.200" height="4.100"/><rect x="14.6" y="5.5" width="5.200" height="4.100"/><rect x="14.6" y="11.0" width="5.200" height="4.100"/></svg>
<!--FILM-END-->
<div class="abs" style="left:304px;top:196px;width:1399px;height:20px;background:#e8eaed"></div>
<div class="abs" style="left:304px;top:196px;width:19px;height:20px;background:#fff"></div>
<div class="abs" style="left:416px;top:196px;width:1200px;height:19px;background:#fff"></div>
<div class="abs" style="left:304px;top:216px;width:19px;height:948px;background:#fff"></div>
<div class="abs" style="left:304px;top:216px;width:19px;height:27px;background:#e8eaed"></div>
<div class="abs" style="left:304px;top:1144px;width:19px;height:20px;background:#e8eaed"></div>
<svg class="abs" style="left:413.5px;top:196px" width="1210" height="20" viewBox="0 0 1210 20"><path d="M11.8 8.300v3.400 M23.6 5.500v9 M35.4 8.300v3.400 M59.1 8.300v3.400 M70.9 5.500v9 M82.7 8.300v3.400 M106.3 8.300v3.400 M118.1 5.500v9 M129.9 8.300v3.400 M153.5 8.300v3.400 M165.4 5.500v9 M177.2 8.300v3.400 M200.8 8.300v3.400 M212.6 5.500v9 M224.4 8.300v3.400 M248.0 8.300v3.400 M259.8 5.500v9 M271.7 8.300v3.400 M295.3 8.300v3.400 M307.1 5.500v9 M318.9 8.300v3.400 M342.5 8.300v3.400 M354.3 5.500v9 M366.1 8.300v3.400 M389.8 8.300v3.400 M401.6 5.500v9 M413.4 8.300v3.400 M437.0 8.300v3.400 M448.8 5.500v9 M460.6 8.300v3.400 M484.3 8.300v3.400 M496.1 5.500v9 M507.9 8.300v3.400 M531.5 8.300v3.400 M543.3 5.500v9 M555.1 8.300v3.400 M578.7 8.300v3.400 M590.5 5.500v9 M602.4 8.300v3.400 M626.0 8.300v3.400 M637.8 5.500v9 M649.6 8.300v3.400 M673.2 8.300v3.400 M685.0 5.500v9 M696.8 8.300v3.400 M720.5 8.300v3.400 M732.3 5.500v9 M744.1 8.300v3.400 M767.7 8.300v3.400 M779.5 5.500v9 M791.3 8.300v3.400 M815.0 8.300v3.400 M826.8 5.500v9 M838.6 8.300v3.400 M862.2 8.300v3.400 M874.0 5.500v9 M885.8 8.300v3.400 M909.4 8.300v3.400 M921.3 5.500v9 M933.1 8.300v3.400 M956.7 8.300v3.400 M968.5 5.500v9 M980.3 8.300v3.400 M1003.9 8.300v3.400 M1015.7 5.500v9 M1027.6 8.300v3.400 M1051.2 8.300v3.400 M1063.0 5.500v9 M1074.8 8.300v3.400 M1098.4 8.300v3.400 M1110.2 5.500v9 M1122.0 8.300v3.400 M1145.7 8.300v3.400 M1157.5 5.500v9 M1169.3 8.300v3.400 M1192.9 8.300v3.400" stroke="#a4a9ae" stroke-width="1.300" fill="none"/></svg>
<span class="t rn" style="left:445.7px;top:198.700px">1</span>
<span class="t rn" style="left:493.0px;top:198.700px">2</span>
<span class="t rn" style="left:540.2px;top:198.700px">3</span>
<span class="t rn" style="left:587.5px;top:198.700px">4</span>
<span class="t rn" style="left:634.7px;top:198.700px">5</span>
<span class="t rn" style="left:682.0px;top:198.700px">6</span>
<span class="t rn" style="left:729.2px;top:198.700px">7</span>
<span class="t rn" style="left:776.5px;top:198.700px">8</span>
<span class="t rn" style="left:823.7px;top:198.700px">9</span>
<span class="t rn" style="left:870.9px;top:198.700px">10</span>
<span class="t rn" style="left:918.2px;top:198.700px">11</span>
<span class="t rn" style="left:965.4px;top:198.700px">12</span>
<span class="t rn" style="left:1012.7px;top:198.700px">13</span>
<span class="t rn" style="left:1059.9px;top:198.700px">14</span>
<span class="t rn" style="left:1107.2px;top:198.700px">15</span>
<span class="t rn" style="left:1154.4px;top:198.700px">16</span>
<span class="t rn" style="left:1201.6px;top:198.700px">17</span>
<span class="t rn" style="left:1248.9px;top:198.700px">18</span>
<span class="t rn" style="left:1296.1px;top:198.700px">19</span>
<span class="t rn" style="left:1343.4px;top:198.700px">20</span>
<span class="t rn" style="left:1390.6px;top:198.700px">21</span>
<span class="t rn" style="left:1437.9px;top:198.700px">22</span>
<span class="t rn" style="left:1485.1px;top:198.700px">23</span>
<span class="t rn" style="left:1532.4px;top:198.700px">24</span>
<span class="t rn" style="left:1579.6px;top:198.700px">25</span>
<svg class="abs" style="left:304px;top:241.3px" width="19" height="922" viewBox="0 0 19 922"><path d="M8 11.8h3.400 M5.200 23.6h9 M8 35.4h3.400 M8 59.0h3.400 M5.200 70.8h9 M8 82.5h3.400 M8 106.1h3.400 M5.200 117.9h9 M8 129.7h3.400 M8 153.3h3.400 M5.200 165.1h9 M8 176.9h3.400 M8 200.5h3.400 M5.200 212.3h9 M8 224.1h3.400 M8 247.6h3.400 M5.200 259.4h9 M8 271.2h3.400 M8 294.8h3.400 M5.200 306.6h9 M8 318.4h3.400 M8 342.0h3.400 M5.200 353.8h9 M8 365.6h3.400 M8 389.2h3.400 M5.200 400.9h9 M8 412.7h3.400 M8 436.3h3.400 M5.200 448.1h9 M8 459.9h3.400 M8 483.5h3.400 M5.200 495.3h9 M8 507.1h3.400 M8 530.7h3.400 M5.200 542.5h9 M8 554.2h3.400 M8 577.8h3.400 M5.200 589.6h9 M8 601.4h3.400 M8 625.0h3.400 M5.200 636.8h9 M8 648.6h3.400 M8 672.2h3.400 M5.200 684.0h9 M8 695.8h3.400 M8 719.3h3.400 M5.200 731.1h9 M8 742.9h3.400 M8 766.5h3.400 M5.200 778.3h9 M8 790.1h3.400 M8 813.7h3.400 M5.200 825.5h9 M8 837.3h3.400 M8 860.9h3.400 M5.200 872.6h9 M8 884.4h3.400 M8 908.0h3.400" stroke="#a4a9ae" stroke-width="1.300" fill="none"/></svg>
<span class="t rv" style="left:298.500px;top:281.2px">1</span>
<span class="t rv" style="left:298.500px;top:328.3px">2</span>
<span class="t rv" style="left:298.500px;top:375.5px">3</span>
<span class="t rv" style="left:298.500px;top:422.7px">4</span>
<span class="t rv" style="left:298.500px;top:469.9px">5</span>
<span class="t rv" style="left:298.500px;top:517.0px">6</span>
<span class="t rv" style="left:298.500px;top:564.2px">7</span>
<span class="t rv" style="left:298.500px;top:611.4px">8</span>
<span class="t rv" style="left:298.500px;top:658.5px">9</span>
<span class="t rv" style="left:298.500px;top:705.7px">10</span>
<span class="t rv" style="left:298.500px;top:752.9px">11</span>
<span class="t rv" style="left:298.500px;top:800.0px">12</span>
<span class="t rv" style="left:298.500px;top:847.2px">13</span>
<span class="t rv" style="left:298.500px;top:894.4px">14</span>
<span class="t rv" style="left:298.500px;top:941.6px">15</span>
<span class="t rv" style="left:298.500px;top:988.7px">16</span>
<span class="t rv" style="left:298.500px;top:1035.9px">17</span>
<span class="t rv" style="left:298.500px;top:1083.1px">18</span>
<span class="t rv" style="left:298.500px;top:1130.2px">19</span>

<!--SLIDE-START-->
<div class="abs" style="left:413px;top:240px;width:1202px;height:902px;background:#d3d4d6;box-shadow:1px 2px 4px rgba(0,0,0,.10)"></div>
<div id="slide" class="abs" style="left:414px;top:241px;width:1200px;height:900px;background:#fff"></div>
<div class="abs" style="left:420px;top:241px;width:4px;height:900px;background:#d7e3fb"></div>
<div class="abs" style="left:424px;top:241px;width:4.300px;height:900px;background:#aec0de"></div>
<div class="abs" style="left:1560.700px;top:241px;width:5.200px;height:900px;background:#b4c1df"></div>
<div class="abs" style="left:1573px;top:241px;width:41px;height:900px;background:#b5c1e7"></div>
<div class="abs" style="left:1580.500px;top:241px;width:1.700px;height:900px;background:#9bcaf6"></div>
<div class="abs" style="left:1582.200px;top:241px;width:1.800px;height:900px;background:#486c9f"></div>
<div class="abs" style="left:1592px;top:241px;width:1.200px;height:900px;background:#a2afde"></div>
<div id="stitle" class="abs" style="left:0;top:341px;font-size:29.600px;font-weight:bold;color:#0433c9">
<span id="tw0" class="t" style="left:631.1px;top:0;transform-origin:0 0;transform:scaleX(0.9556)">INTRODUCTION</span>
<span id="tw1" class="t" style="left:857.5px;top:0;transform-origin:0 0;transform:scaleX(0.8750)">SUR</span>
<span id="tw2" class="t" style="left:920.5px;top:0;transform-origin:0 0;transform:scaleX(0.8670)">LA</span>
<span id="tw3" class="t" style="left:963.0px;top:0;transform-origin:0 0;transform:scaleX(0.8640)">RESPONSABLE</span>
<span id="tw4" class="t" style="left:1165.8px;top:0;transform-origin:0 0;transform:scaleX(0.9470)">COMMERCIALE</span>
</div>
<span id="sdia" class="t dv" style="left:500.500px;top:419.500px;font-size:33px;color:#0433c9">❖</span>
<div id="ssub" class="abs" style="left:0;top:421.500px;font-size:28.500px;font-weight:bold;color:#0433c9">
<span id="sw0" class="t" style="left:529.4px;top:0;transform-origin:0 0;transform:scaleX(0.9040)">RESPONSABLE</span>
<span id="sw1" class="t" style="left:733.9px;top:0;transform-origin:0 0;transform:scaleX(0.9760)">COMMERCIALE</span>
</div>
<div class="abs" style="left:1483.600px;top:990.500px;width:72px;height:72px;border-radius:50%;background:#0a6acd"></div>
<svg class="abs" style="left:499px;top:494px" width="993" height="527" viewBox="499 494 993 527">
<defs>
<clipPath id="ic"><rect x="499" y="494" width="993" height="527"/></clipPath>
<linearGradient id="baseg" x1="0" y1="0" x2="0" y2="1"><stop offset="0" stop-color="#f4f6f8"/><stop offset=".45" stop-color="#d5dae0"/><stop offset="1" stop-color="#8f98a3"/></linearGradient>
<linearGradient id="bezg" x1="0" y1="0" x2="1" y2="0"><stop offset="0" stop-color="#a9aaab"/><stop offset=".03" stop-color="#3a3f45"/><stop offset=".06" stop-color="#151a20"/><stop offset="1" stop-color="#0d1218"/></linearGradient>
<g id="cloudS"><path d="M8 24.500a7.500 7.500 0 0 1 1-14.900a9 9 0 0 1 16.500 2.200a6.500 6.500 0 0 1 2.500 12.700z" fill="#fff"/></g>
</defs>
<g id="illusg" clip-path="url(#ic)">
<rect x="499" y="494" width="993" height="527" fill="#a9cdfb"/>
<!-- hill -->
<path d="M499 997 C640 978 820 967 1000 967 C1180 969 1350 990 1492 1019 L1492 1021 L499 1021z" fill="#6e9fe2"/>
<!-- dashed arcs -->
<g fill="none" stroke="#fff" stroke-opacity=".62" stroke-width="2.300" stroke-dasharray="12 9" stroke-linecap="butt">
<path d="M703 847 C697 815 700 785 706 762 C716 720 735 685 760 655 C800 612 860 572 920 550 C960 537 1010 532 1050 542 C1090 553 1130 575 1165 606 C1205 640 1240 690 1262 736"/>
<path d="M734 847 C724 815 727 785 733 760 C742 725 760 690 786 660 C815 628 860 598 905 581 C940 569 975 565 1010 569 C1060 576 1105 594 1140 619 C1180 650 1210 700 1228 748"/>
</g>
<!-- clouds -->
<path d="M937 558C929 558 922.600 545 922.600 531.200C922.600 521 926 515.500 930.500 512.700C936 509 942 507.500 948 507.200C948 502 949 498 950.300 495.200L950.300 493L985 493L985 495.200C988.500 497 991 500 992.400 503.500C996.500 504.500 1000.500 506.300 1003.500 509C1011 513 1017.500 520 1020.100 529.300C1021.800 536 1021.500 542.500 1019.200 547.800C1017.500 552.500 1014.500 556.500 1010.900 558Z" fill="#fff"/>
<path id="cloudR" d="M1417.700 829.600C1408 829.600 1404.900 820 1404.900 811.300C1404.900 802 1409 796.500 1412.900 794.600C1416 792.500 1420 790.500 1424.600 789.800C1425.500 787 1427 784.500 1428.800 782.900C1432 779.500 1436 777.300 1440.600 777.300C1445.500 777.300 1449.500 780 1452.300 783.600C1453.800 785 1455 786.300 1455.800 787.700C1459 787.500 1461.500 788.500 1463.400 789.800C1466 791.800 1467.600 794.500 1468.300 797.400C1471.500 798.500 1474.500 800.500 1476.600 803C1479 805.800 1480.400 809 1480.400 812.600C1480.400 817 1479.300 821 1477.300 824.400C1475.500 827.500 1473 829.600 1469.700 829.600Z" fill="#fff"/>
<use href="#cloudR" transform="translate(290.400 346.300) scale(.473)"/>
<!-- store -->
<g>
<path d="M655.800 713.500L721.500 686.500L731 721L667.500 749z" fill="#d3e4f2"/>
<path d="M688 700l10 34.500" stroke="#e9f1f8" stroke-width="2.500"/>
<path d="M655.800 713.500L721.500 686.500L722.300 689.500L656.500 716.500z" fill="#bccfe0"/>
<path d="M664.800 748.500L735.500 718.500L740.300 724.500L667.300 758z" fill="#3a1414"/>
<path d="M642 686.500L702 660.300L723 679.300L721.500 685L645.500 716z" fill="#fa3d1f"/>
<path d="M657 680l15-6.500 6.500 27-17 7zM687 667l15-6.700 14 24.500-17.500 7.200z" fill="#f2592a" opacity=".9"/>
<path d="M645.500 716l76-31" stroke="#e2371f" stroke-width="1.500"/>
</g>
<!-- money 1 -->
<g transform="translate(774.800 689.300) scale(1.050 1.060)">
<path d="M-37 -17 C-22 -10 -8 -13 6 -18.500 C18 -22.500 29 -21 37 -15.500 L36 15 C28 9.500 17 9 5 13.500 C-9 18.500 -23 19.500 -36.500 13z" fill="#7fb644" stroke="#94c257" stroke-width="1.200"/>
<path d="M-33 -11.800 C-21 -6.500 -8 -9 6 -14.500 C17 -18.500 26 -17 33 -12 L32.200 9 C26 5 16 4.500 5 9 C-9 14 -21 15 -32.500 9.500z" fill="none" stroke="#d9efb0" stroke-width="1.300"/>
<ellipse cx="-.5" cy="-2" rx="8.800" ry="8.200" fill="#edf6d8"/>
<text x="-.5" y="2.800" font-family="Liberation Sans,sans-serif" font-weight="bold" font-size="12.500" text-anchor="middle" fill="#7fb644">$</text>
</g>
<!-- basket -->
<g>
<path d="M745.500 586.500l14-17.500M789 598.500l-2.500-25" stroke="#2b1216" stroke-width="4.600" stroke-linecap="round" fill="none"/>
<path d="M732.500 580.600L812.500 602a3.500 3.500 0 0 1 2.400 4.600L797.500 647.500a4.500 4.500 0 0 1-5.300 2.600L727.800 631a4.500 4.500 0 0 1-3.300-4.300L728.300 584a3.500 3.500 0 0 1 4.200-3.400z" fill="#ee3b2e"/>
<g stroke="#fff" stroke-width="3.200" stroke-linecap="round">
<path d="M735 589.500l-2 33M742.500 591.500l-1.600 33.300M750 593.500l-1.400 33.600M757.500 595.500l-1.700 33.900M765 597.500l-2.300 34.200M772.500 599.500l-3.200 34.500M780 601.500l-4.200 34.800M787.500 603.500l-5.400 35.100M795 605.500l-6.800 35.400M802.500 607.500l-8.500 35.700M809 609.500l-9.500 35.500"/>
</g>
</g>
<!-- credit card -->
<g>
<path d="M838 540.500L903 520.500a4 4 0 0 1 5 2.600L920.500 561a4 4 0 0 1-2.600 5L861 583.500a4 4 0 0 1-5-2.600L835.400 545.500a4 4 0 0 1 2.600-5z" fill="#ffa52f"/>
<circle cx="893.700" cy="543.600" r="14.500" fill="none" stroke="#ffe4b0" stroke-width="1.800"/>
<path d="M879.500 543.600h28.400M893.700 529.200v28.800M882 535.500c7 3.500 16 3.500 23.400 0M882 551.700c7-3.500 16-3.500 23.400 0" stroke="#ffe4b0" stroke-width="1.500" fill="none"/>
<ellipse cx="893.700" cy="543.600" rx="6.500" ry="14.500" fill="none" stroke="#ffe4b0" stroke-width="1.500"/>
<path d="M861 576.500L916 561.500" stroke="#3b2a12" stroke-width="2.400" stroke-dasharray="9 3.500"/>
<path d="M849 562.500l13-4 2.200 7-13 4z" fill="#14202b"/>
</g>
<!-- magnifier -->
<g>
<path d="M851 599l24 24" stroke="#3fa7da" stroke-width="9.500" stroke-linecap="round"/>
<path d="M848 596l9 9" stroke="#123040" stroke-width="8"/>
<circle cx="833.600" cy="582.400" r="19.500" fill="#b9dfe6" stroke="#0f2f3d" stroke-width="6.500"/>
</g>
<!-- globe -->
<g fill="none" stroke="#14304b" stroke-width="3">
<circle cx="982" cy="573.600" r="27.500"/>
<ellipse cx="982" cy="573.600" rx="12.500" ry="27.500"/>
<path d="M982 546v55.200M954.500 573.600h55M959.500 558.500c14 6 31 6 45 0M959.500 588.700c14-6 31-6 45 0"/>
</g>
<!-- gift -->
<g>
<path d="M1031.600 542L1101 559.300L1090.500 603.400L1024.600 586z" fill="#f0561d"/>
<path d="M1032.800 524.500L1110.300 542L1106.700 558.500L1029.800 541z" fill="#f35e22"/>
<path d="M1030.500 541.500L1105 558.500l-.5 2L1030 543.500z" fill="#e04e1c"/>
<path d="M1066.300 533.500L1079.300 536.300L1066.400 597L1053.500 593.800z" fill="#0f2340"/>
<path d="M1069.500 534C1061 523 1049.500 510.500 1053 506C1056.500 502 1063.500 509.500 1066.500 516.500C1069 522.500 1070.500 528.500 1070.500 534M1071.500 534C1076.500 523 1090 514 1098 515C1103.500 516 1101 521.500 1095 524.500C1088 528.500 1079.500 531.500 1071.500 534" fill="none" stroke="#0f2340" stroke-width="5.600" stroke-linejoin="round"/>
</g>
<!-- money 2 -->
<g transform="translate(1112.700 610.500) rotate(-51.500) scale(.83 1)">
<path d="M-45 -17 C-30 -11 -15 -13 0 -18 C15 -23 32 -22 45 -16 L44 16 C32 10 15 9.500 0 14 C-15 19 -30 20 -44.500 14z" fill="#7fb644" stroke="#94c257" stroke-width="1.200"/>
<path d="M-40.500 -11.800 C-28 -6.500 -14 -8.500 0 -13.500 C14 -18 29 -17 40.500 -11.500 L39.600 9.500 C29 4.500 14 4 0 8.500 C-14 13 -28 14 -40 8.500z" fill="none" stroke="#d9efb0" stroke-width="1.300"/>
<ellipse cx="0" cy="-2" rx="10.500" ry="8.500" fill="#edf6d8"/>
<text x="0" y="2.800" font-family="Liberation Sans,sans-serif" font-weight="bold" font-size="12.500" text-anchor="middle" fill="#7fb644">$</text>
</g>
<!-- envelope -->
<g stroke="#23335c" stroke-width="1.300" stroke-linejoin="round">
<path d="M1150.600 543.200L1200.300 565.200L1185.300 597.500L1135.500 573.200z" fill="#fff"/>
<path d="M1150.600 543.200L1172 578L1200.300 565.200M1135.500 573.200L1167 570M1185.300 597.500L1175 576" fill="none" stroke="#9aa3b8"/>
</g>
<!-- open box -->
<g>
<path d="M1171 650L1207 631L1243 650L1207 668z" fill="#e9a547"/>
<path d="M1171 650L1207 668L1207 703L1171 684z" fill="#f7b855"/>
<path d="M1243 650L1207 668L1207 703L1243 684z" fill="#efa944"/>
<path d="M1171 650L1207 631L1189 608.500L1154 628z" fill="#fbc465"/>
<path d="M1243 650L1207 631L1227 607.500L1261 627z" fill="#fbc465"/>
<path d="M1171 650L1207 668L1190 684L1154.500 665z" fill="#fcc86c"/>
<path d="M1243 650L1207 668L1225 683L1260.500 664z" fill="#f9bd5c"/>
</g>
<!-- bag -->
<g>
<path d="M1126.500 702.500L1292.300 719.600L1280.400 744L1118.400 727z" fill="#f9a22b"/>
<path d="M1126.500 702.500L1135 716L1118.400 727z" fill="#f4961f"/>
<path d="M1280.400 743.800L1292.300 719.600L1276.500 914L1266 919z" fill="#e9a41e"/>
<path d="M1118.400 726.800L1280.400 743.800L1266 919L1099.800 906z" fill="#fdb92f"/>
<path d="M1166.500 752c-2 28 10 47 31.500 47.500c21 .5 32-18 32-43.500" fill="none" stroke="#fff7e0" stroke-width="7.500" stroke-linecap="round"/>
<circle cx="1166.500" cy="745.500" r="4.500" fill="#f9a22b"/><circle cx="1230" cy="751.500" r="4.500" fill="#f9a22b"/>
</g>
<!-- cart -->
<g fill="none" stroke="#0c2230" stroke-linecap="round" stroke-linejoin="round">
<g stroke-width="6">
<path d="M1117 812L1098.500 906M1143.500 812L1121 908.500M1171.500 812L1147.500 911M1199.500 812L1173 913.500M1226 812L1199.500 916M1252.500 812L1226 918.500M1279 812L1254 920.500"/>
</g>
<path d="M1072 809H1316" stroke-width="10.500"/>
<path d="M1072.500 811L1090.500 910.500L1273 927.500" stroke-width="10"/>
<path d="M1083 816l8.500 0l-2.500 26z" fill="#0c2230" stroke-width="5"/>
<path d="M1366 788L1328.500 783L1263.500 965.500H1093" stroke-width="10.500"/>
</g>
<g>
<circle cx="1121" cy="989.500" r="20" fill="#0c2230"/><circle cx="1121" cy="989.500" r="11.500" fill="none" stroke="#7d8e9c" stroke-width="1.800"/>
<circle cx="1230.700" cy="989.500" r="20" fill="#0c2230"/><circle cx="1230.700" cy="989.500" r="11.500" fill="none" stroke="#7d8e9c" stroke-width="1.800"/>
</g>
<!-- laptop -->
<g>
<ellipse cx="713" cy="1007" rx="165" ry="7" fill="#2f5f9f" opacity=".8"/>
<path d="M578 993.500V813a4.500 4.500 0 0 1 4.500-4.500H844a4.500 4.500 0 0 1 4.500 4.500V993.500z" fill="url(#bezg)"/>
<path d="M579 818V813a4.500 4.500 0 0 1 4.500-4.500H733l-6 10z" fill="#9d9e9f"/>
<rect x="584.500" y="818.800" width="257.500" height="167" fill="#fff"/>
<rect x="584.500" y="818.800" width="257.500" height="28.500" fill="#1f61c1"/>
<circle cx="713.500" cy="812.800" r="1.600" fill="#0a0a0a"/>
<text x="591" y="837.400" font-family="Liberation Sans,sans-serif" font-weight="bold" font-size="13.500" letter-spacing="-.7" fill="#fff">facebook</text>
<path d="M751 831.200h60M751 837.300h60" stroke="#4d8ae6" stroke-width="1.500"/>
<rect x="815.700" y="829.600" width="22.500" height="5.800" rx="2.900" fill="#e33a34"/>
<rect x="594" y="857.300" width="64.300" height="52.700" fill="#b9d5fb"/>
<path d="M672.500 870.700h150M672.500 878h150M672.500 885.600h150M672.500 893.300h150M672.500 901h150M596.500 928h149M596.500 935.700h149M596.500 943.400h149M596.500 951.100h149M596.500 958.800h149" stroke="#e2e2e2" stroke-width="2"/>
<rect x="773.800" y="912.600" width="46.300" height="10.800" rx="5.400" fill="#d9d9d9"/>
<g fill="none" stroke="#fff" stroke-opacity=".8" stroke-width="2.300" stroke-dasharray="12 9"><path d="M700 809C699 822 700 835 703.500 847M726 809C725 822 728 835 734 847"/></g>
<rect x="551.500" y="994" width="322.500" height="12.300" rx="6" fill="url(#baseg)"/>
</g>
<!-- move cursor -->
<g transform="translate(1266 730.500)">
<path d="M0 -12l5 6h-10zM0 12l5-6h-10zM-12 0l6-5v10zM12 0l-6-5v10z" fill="#111" stroke="#fff" stroke-width="1.200"/>
<rect x="-5" y="-5" width="10" height="10" fill="#fff" stroke="#111" stroke-width="1.500"/><circle cx="0" cy="0" r="2" fill="#111"/>
</g>
</g>
</svg>

<!--SLIDE-END-->


<svg class="abs" style="left:1729px;top:168.500px" width="26.400" height="26" viewBox="0 0 26 26">
<rect x="0" y="0" width="26" height="26" rx="2.500" fill="#4285f4"/>
<path d="M20 0h3.500a2.500 2.500 0 0 1 2.500 2.500v3.500h-6z" fill="#1967d2"/>
<rect x="20" y="6" width="6" height="14" fill="#fbbc04"/>
<path d="M0 20h6v6h-3.500a2.500 2.500 0 0 1-2.500-2.500z" fill="#188038"/>
<rect x="6" y="20" width="14" height="6" fill="#34a853"/>
<path d="M20 20h6l-6 6z" fill="#ea4335"/>
<rect x="6" y="6" width="14" height="14" fill="#fff"/>
<text x="13" y="17.300" font-family="Liberation Sans,sans-serif" font-size="10.500" font-weight="bold" text-anchor="middle" fill="#4285f4" textLength="11" lengthAdjust="spacingAndGlyphs">31</text>
</svg>
<svg class="abs" style="left:1729px;top:246.500px" width="26.800" height="26.400" viewBox="0 0 26 26">
<rect x="0" y="0" width="26" height="26" rx="2.500" fill="#fbbc04"/>
<path d="M13 5.500a5.300 5.300 0 0 0-3 9.700v2.300h6v-2.300a5.300 5.300 0 0 0-3-9.700z" fill="#fff"/>
<rect x="10.500" y="18.600" width="5" height="1.700" fill="#fff"/>
</svg>
<svg class="abs" style="left:1729.500px;top:324.500px" width="27" height="27" viewBox="0 0 27 27">
<circle cx="13.200" cy="13.800" r="9.300" fill="none" stroke="#1a73e8" stroke-width="4"/>
<path d="M8.500 13.500l3.700 3.700 7.500-7.700" fill="none" stroke="#1a73e8" stroke-width="3.600"/>
<circle cx="21.600" cy="5.600" r="2.600" fill="#174ea6"/>
</svg>
<div class="abs" style="left:1729px;top:399.500px;width:27px;height:1px;background:#dadce0"></div>
<svg class="abs" style="left:1734.800px;top:453.700px" width="16" height="16" viewBox="0 0 16 16"><path d="M8 0v16M0 8h16" stroke="#5f6368" stroke-width="2"/></svg>
<svg class="abs" style="left:1734.500px;top:1239.500px" width="14" height="20" viewBox="0 0 14 20"><path d="M3.500 3.500l6.500 6.500-6.500 6.500" fill="none" stroke="#3c4043" stroke-width="2.400"/></svg>
<div class="abs" style="left:1628px;top:1226px;width:51px;height:52px;border:1px solid #e4e6e9;border-radius:5px;background:#fff;box-shadow:0 1px 2px rgba(60,64,67,.12)"></div>
<svg class="abs" style="left:1640px;top:1237px" width="27" height="31" viewBox="0 0 27 31"><path d="M3 1h21a2 2 0 0 1 2 2v21a2 2 0 0 1-2 2h-7l-3.500 4-3.500-4h-7a2 2 0 0 1-2-2v-21a2 2 0 0 1 2-2z" fill="#5f6368"/><path d="M13.500 4.500c1 5.500 3.200 8 9 9-5.800 1-8 3.500-9 9-1-5.500-3.200-8-9-9 5.800-1 8-3.500 9-9z" fill="#fff"/></svg>
<div class="abs" style="left:990.300px;top:1168px;width:3.600px;height:3.600px;border-radius:50%;background:#d3d5d8;box-shadow:11.500px 0 0 #d3d5d8,23px 0 0 #d3d5d8"></div>

<span id="notetxt" class="t dvc" style="left:327.500px;top:1194.300px;font-size:19.700px;color:#202124">Click to add speaker notes</span>

</div>
</body>
</html>
